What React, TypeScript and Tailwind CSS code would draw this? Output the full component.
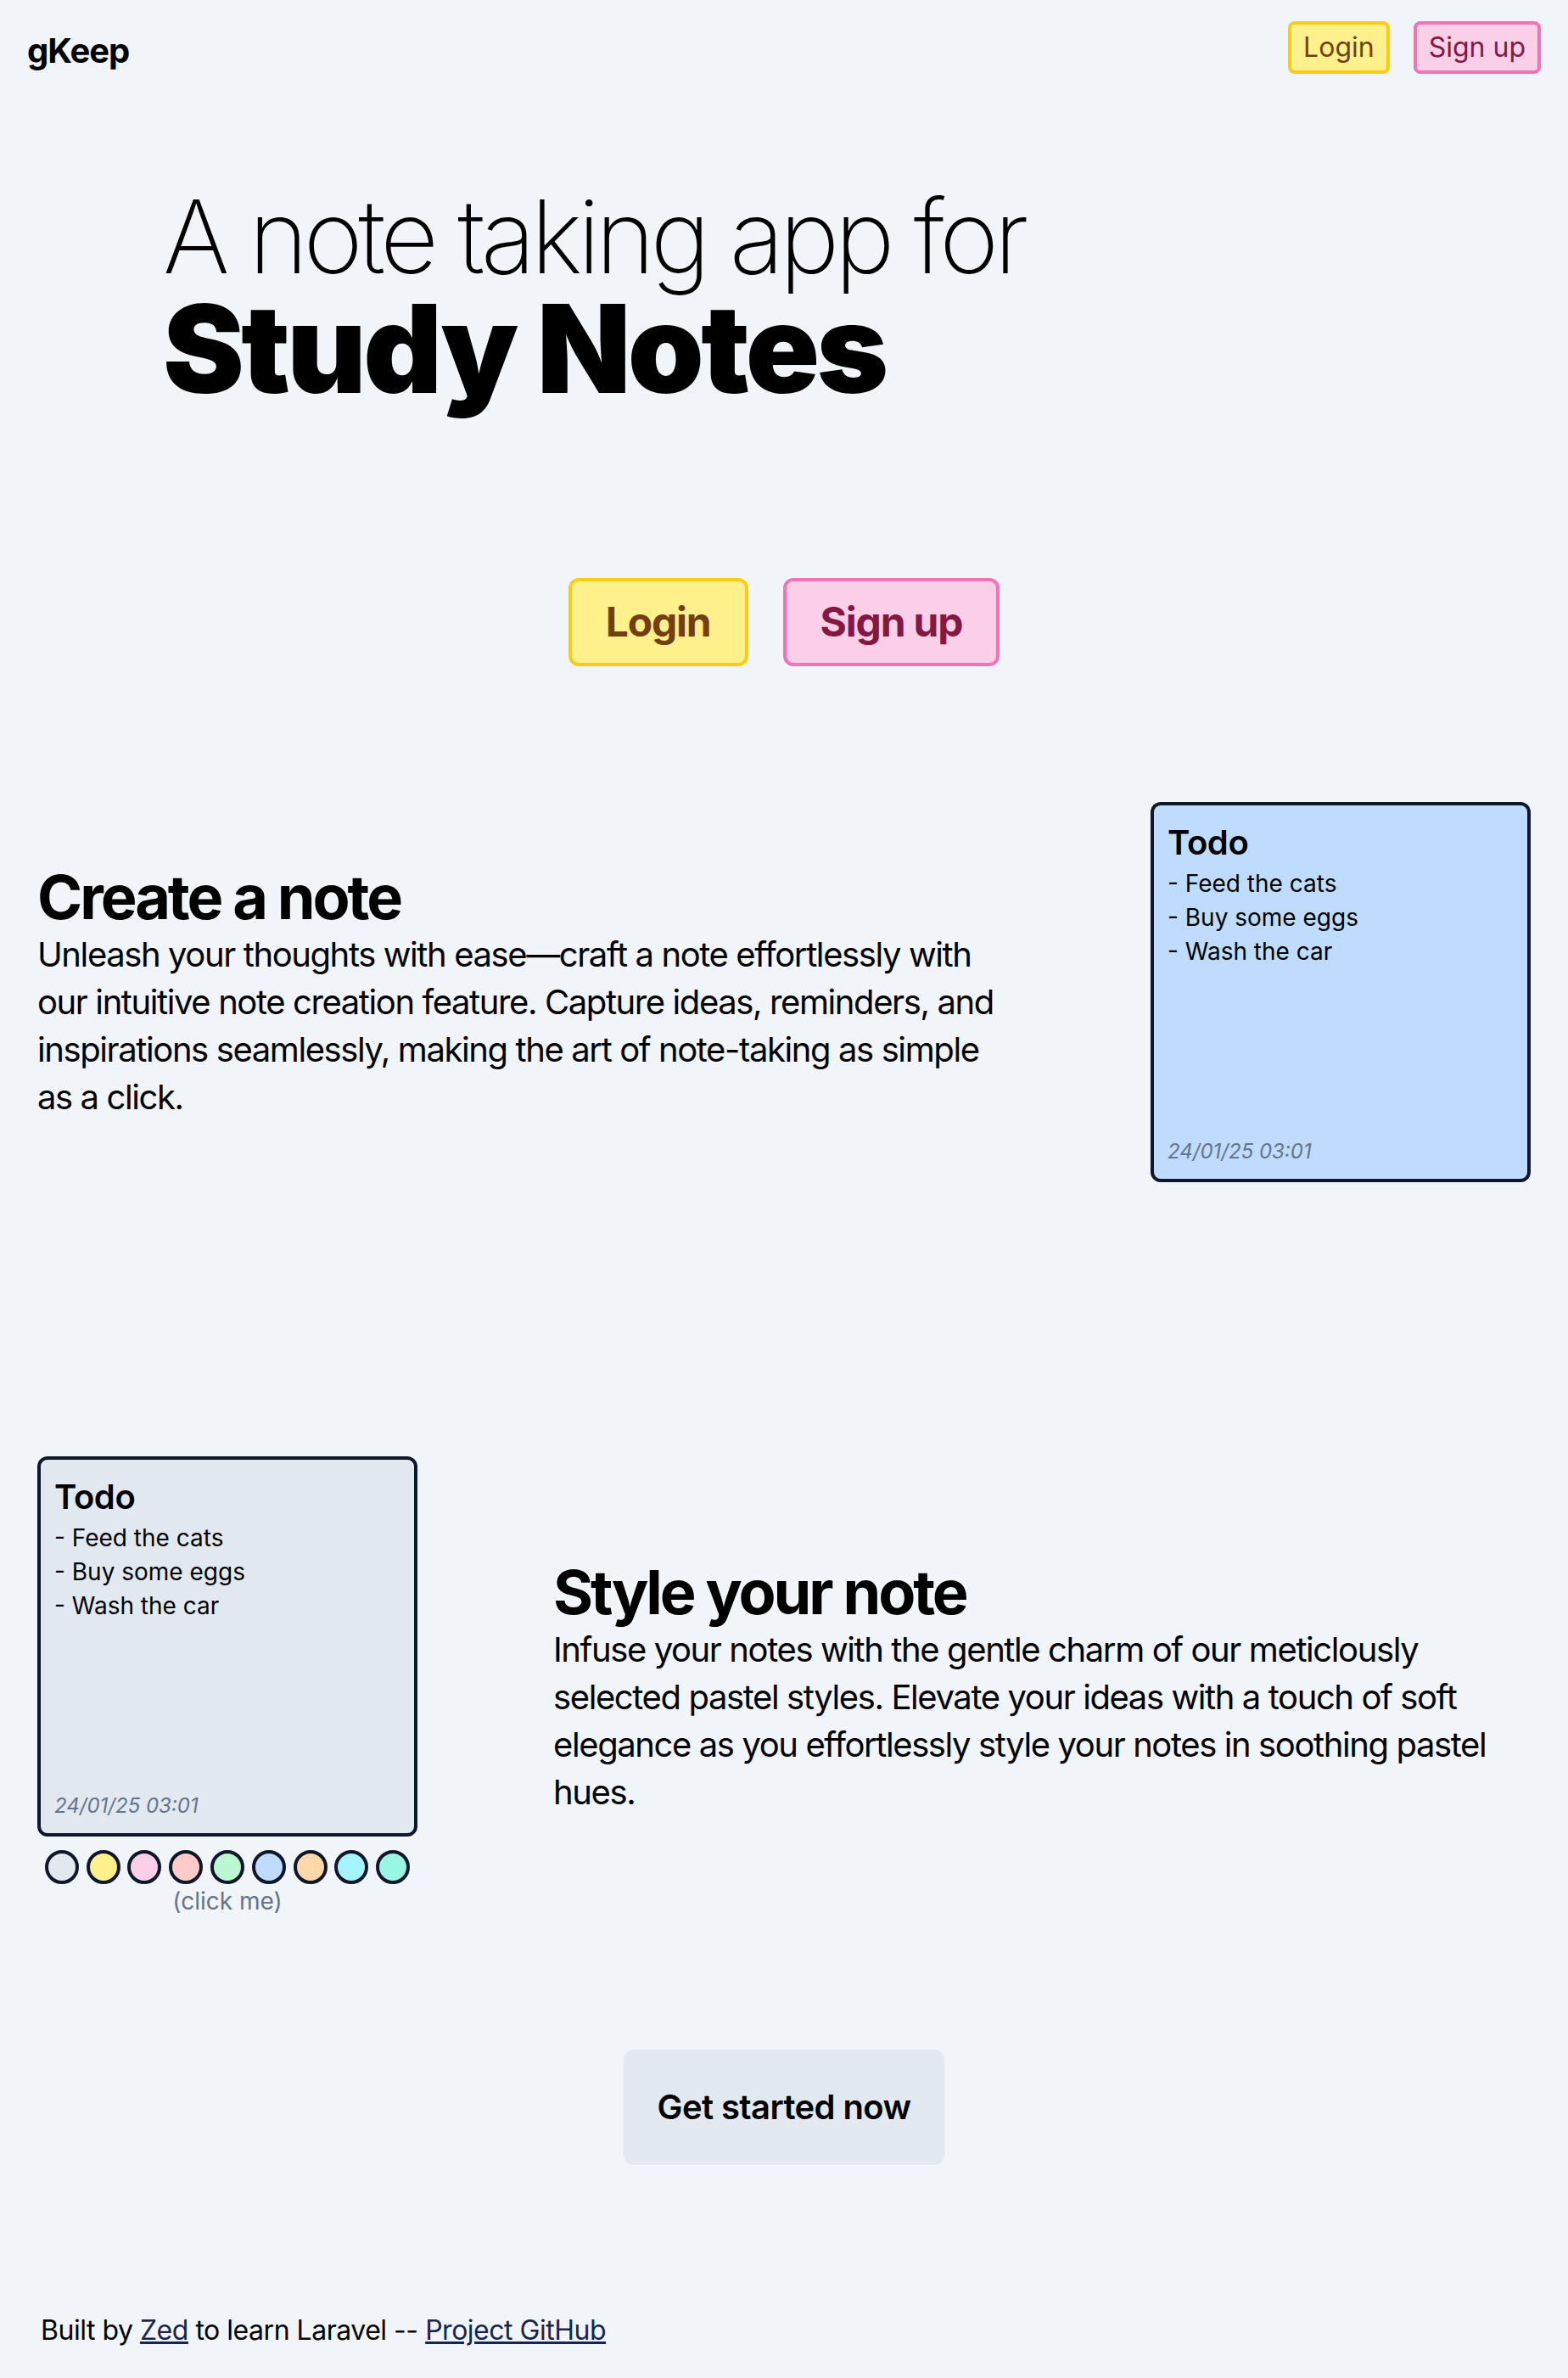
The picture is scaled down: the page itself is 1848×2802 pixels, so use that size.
import React from "react";

function NoteCard({ bg }: { bg: string }) {
  return (
    <div
      className={`w-[448px] h-[448px] border-[4px] border-[#0f172a] rounded-[12px] p-4 flex flex-col ${bg}`}
    >
      <div className="text-[40px] leading-[56px] font-semibold tracking-[-0.01em]">Todo</div>
      <div className="text-[28px] leading-[40px]">
        <div>- Feed the cats</div>
        <div>- Buy some eggs</div>
        <div>- Wash the car</div>
      </div>
      <div className="mt-auto text-[24px] leading-[32px] italic text-[#64748b]">
        24/01/25 03:01
      </div>
    </div>
  );
}

const swatches = [
  "bg-[#e2e8f0]",
  "bg-[#fef08a]",
  "bg-[#fbcfe8]",
  "bg-[#fecaca]",
  "bg-[#bbf7d0]",
  "bg-[#bfdbfe]",
  "bg-[#fed7aa]",
  "bg-[#a5f3fc]",
  "bg-[#99f6e4]",
];

export default function App() {
  return (
    <div className="min-h-screen bg-[#f1f5f9] text-black font-['Inter','Liberation_Sans',sans-serif]">
      <header className="flex justify-between items-start px-8 pt-[25px]">
        <div className="text-[40px] leading-[56px] font-bold tracking-tight mt-[7px]">gKeep</div>
        <div className="flex gap-[28px]">
          <button className="border-[4px] border-[#facc15] bg-[#fef08a] text-[#713f12] rounded-[8px] px-[14px] py-[3px] text-[32px] leading-[48px]">
            Login
          </button>
          <button className="border-[4px] border-[#f472b6] bg-[#fbcfe8] text-[#831843] rounded-[8px] px-[14px] py-[3px] text-[32px] leading-[48px]">
            Sign up
          </button>
        </div>
      </header>

      <h1 className="pl-[192px] mt-[131px]">
        <span className="block text-[120px] leading-[120px] font-extralight tracking-[-0.048em]">
          A note taking app for
        </span>
        <span className="block text-[144px] leading-[144px] font-black tracking-tight">
          Study Notes
        </span>
      </h1>

      <div className="flex justify-center gap-[41px] mt-[198px]">
        <button className="border-[4px] border-[#facc15] bg-[#fef08a] text-[#713f12] rounded-[12px] px-10 py-4 text-[48px] leading-[64px] font-bold tracking-tight">
          Login
        </button>
        <button className="border-[4px] border-[#f472b6] bg-[#fbcfe8] text-[#831843] rounded-[12px] px-10 py-4 text-[48px] leading-[64px] font-bold tracking-tight">
          Sign up
        </button>
      </div>

      <section className="flex justify-between items-center px-[44px] mt-[160px]">
        <div className="w-[1152px]">
          <h2 className="text-[72px] leading-[80px] font-bold tracking-[-0.043em]">Create a note</h2>
          <p className="text-[40px] leading-[56px] tracking-[-0.035em] whitespace-nowrap">
            Unleash your thoughts with ease—craft a note effortlessly with
            <br />
            our intuitive note creation feature. Capture ideas, reminders, and
            <br />
            inspirations seamlessly, making the art of note-taking as simple
            <br />
            as a click.
          </p>
        </div>
        <NoteCard bg="bg-[#bfdbfe]" />
      </section>

      <section className="flex justify-between items-center px-[44px] mt-[323px]">
        <div className="flex flex-col items-center">
          <NoteCard bg="bg-[#e2e8f0]" />
          <div className="w-[448px] flex justify-evenly mt-4">
            {swatches.map((s, i) => (
              <div
                key={i}
                className={`w-10 h-10 rounded-full border-[4px] border-[#0f172a] ${s}`}
              />
            ))}
          </div>
          <div className="text-[28px] leading-[40px] text-[#64748b]">(click me)</div>
        </div>
        <div className="w-[1152px]">
          <h2 className="text-[72px] leading-[80px] font-bold tracking-[-0.043em]">Style your note</h2>
          <p className="text-[40px] leading-[56px] tracking-[-0.035em] whitespace-nowrap">
            Infuse your notes with the gentle charm of our meticlously
            <br />
            selected pastel styles. Elevate your ideas with a touch of soft
            <br />
            elegance as you effortlessly style your notes in soothing pastel
            <br />
            hues.
          </p>
        </div>
      </section>

      <div className="flex justify-center mt-[155px]">
        <button className="bg-[#e2e8f0] rounded-[12px] px-10 py-10 text-[40px] leading-[56px] font-semibold tracking-[-0.015em]">
          Get started now
        </button>
      </div>

      <footer className="px-12 mt-[171px] pb-[32px] text-[32px] leading-[48px] tracking-[-0.015em]">
        Built by{" "}
        <a href="#" className="underline text-[#172554]">
          Zed
        </a>{" "}
        to learn Laravel --{" "}
        <a href="#" className="underline text-[#172554]">
          Project GitHub
        </a>
      </footer>
    </div>
  );
}
